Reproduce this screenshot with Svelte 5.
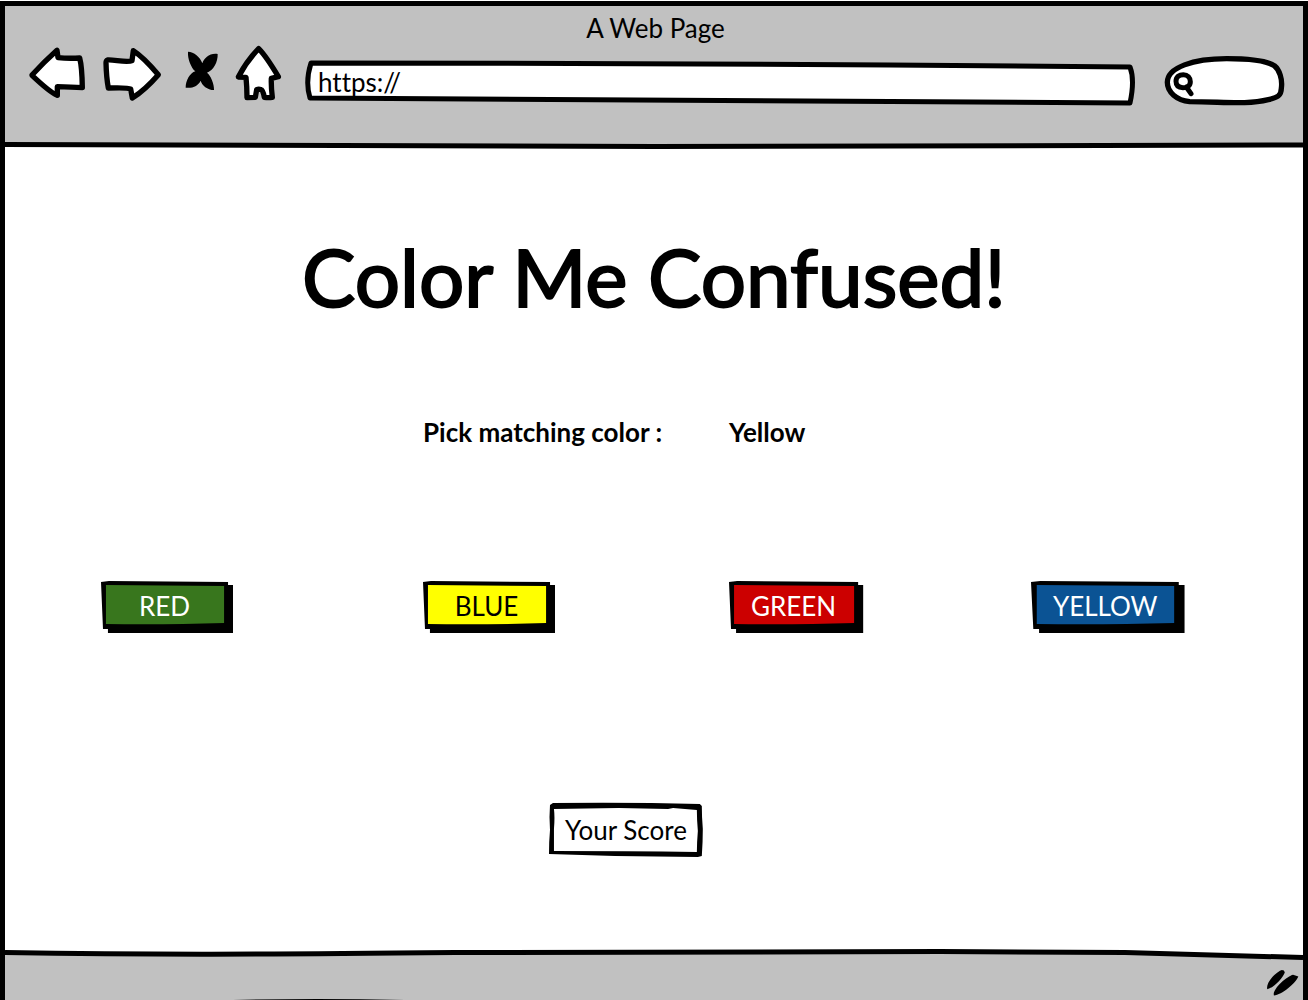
<script>
  const choices = [
    { label: 'RED', tone: 'green' },
    { label: 'BLUE', tone: 'yellow' },
    { label: 'GREEN', tone: 'red' },
    { label: 'YELLOW', tone: 'blue' }
  ];
  let target = $state('Yellow');
</script>

<div class="page">
  <div class="window">
    <header>
      <svg class="backdrop" viewBox="0 0 1298 143" preserveAspectRatio="none" aria-hidden="true">
        <path class="chrome" d="M0 0H1298V139H0Z" />
        <path class="rule" d="M0 138.500C200 140 400 140.500 650 140.500S1100 139.500 1298 139" />
      </svg>
      <div class="caption">A Web Page</div>
      <div class="toolbar">
        <nav aria-label="Browser">
          <button class="tool wide" aria-label="Back">
            <svg viewBox="78 138 186 168"><path class="shape" d="M96 225Q132 186 171 151L174 173Q205 176 239 174Q246 200 247 263Q215 262 172 260L172 286Q150 277 96 226Z" /></svg>
          </button>
          <button class="tool mid" aria-label="Forward">
            <svg viewBox="312 138 180 168"><path class="shape" d="M323 180C340 178 382 190 396 182L400 152Q430 171 475 224Q435 270 397 294L392 267Q384 262 325 264Q319 232 318 188Q318 182 323 180Z" /></svg>
          </button>
          <button class="tool slim" aria-label="Stop">
            <svg viewBox="540 138 120 168"><path d="M564 155C582 156 600 170 607 190C612 174 630 158 653 162C654 186 640 212 621 218C632 226 643 252 642 270C622 270 606 256 602 242C596 256 578 266 557 263C557 242 570 218 586 214C574 204 562 176 564 155Z" /></svg>
          </button>
          <button class="tool home" aria-label="Home">
            <svg viewBox="706 138 132 168"><path class="shape" d="M774 146Q796 168 833 230L812 235Q811 260 815 292Q803 294 791 292Q787 270 781 269Q774 266 768 269L764 292L739 293Q739 262 736 232L713 231Q738 183 774 146Z" /></svg>
          </button>
        </nav>
        <label class="address">
          <svg class="backdrop" viewBox="0 0 831 46" preserveAspectRatio="none" aria-hidden="true">
            <path class="outline" d="M6 3Q400 3 826 7Q831 20 826 43Q400 42 5 38Q0 22 6 3Z" />
          </svg>
          <input type="text" aria-label="Address" value="https://" />
        </label>
        <label class="search">
          <svg class="backdrop" viewBox="255 171 360 150" preserveAspectRatio="none" aria-hidden="true">
            <path class="shape" d="M329 308C290 304 262 280 262 250C262 205 340 179 440 179C500 179 560 186 583 200C598 212 608 240 604 268C604 290 592 296 565 302C500 318 430 308 329 308Z" />
            <path class="lens" d="M288 247C288 233 298 227 310 227C323 227 331 236 331 248C331 260 322 266 309 266C296 266 288 260 288 247ZM319 264L333 284" />
          </svg>
          <input type="search" aria-label="Search" />
        </label>
      </div>
    </header>

    <main>
      <h1>Color Me Confused!</h1>
      <div class="prompt columns">
        <span class="question">Pick matching color :</span>
        <span>{target}</span>
      </div>
      <div class="columns">
        {#each choices as choice}
          <button class="choice {choice.tone}">
            <svg class="backdrop" viewBox="0 0 133 53" preserveAspectRatio="none" aria-hidden="true">
              <path d="M0 2L8 1L128 2V5H133V53L7 53V49H2Z" />
              <path class="face" d="M5 5L124 6V43Q60 45 5 44Z" />
            </svg>
            <span>{choice.label}</span>
          </button>
        {/each}
      </div>
      <div class="result">
        <button class="score">
          <svg class="backdrop" viewBox="0 0 155 54" preserveAspectRatio="none" aria-hidden="true">
            <path fill-rule="evenodd" d="M1 2L4 0Q80 -1 152 1L154 3Q154 14 155 26Q155 38 154 53L150 54Q75 54 0 51Q0 38 1 27Q0 14 1 2ZM5 6Q6 14 5 26Q5 38 5 48Q80 48 149 49Q149 40 150 28Q149 16 149 7L137 6L125 5L120 6L70 5Z" />
          </svg>
          <span>Your Score</span>
        </button>
      </div>
    </main>

    <footer>
      <svg class="backdrop" viewBox="0 0 1298 52" preserveAspectRatio="none" aria-hidden="true">
        <path class="chrome" d="M0 4L1120 4L1298 9V52H0Z" />
        <path class="rule" d="M0 4.500C150 7 250 6.500 450 4.500C700 3 900 3 1120 4.500L1298 9.500" />
        <path d="M228 52Q310 50 400 52Z" />
      </svg>
      <svg class="grip" viewBox="558 117 100 84" aria-hidden="true">
        <path d="M562 178C556 158 588 126 604 120Q614 119 615 127C608 146 582 172 562 178ZM582 197C576 178 622 138 640 134L656 139C648 160 606 194 582 197Z" />
      </svg>
    </footer>
  </div>
</div>

<style>
  :global(body) {
    margin: 0;
    background: #fff;
  }
  .page {
    box-sizing: border-box;
    min-height: 100vh;
    padding-top: 1px;
    display: flex;
    font: 26px/32px Lato, "Liberation Sans", sans-serif;
    font-variant-ligatures: none;
    color: #000;
  }
  .window {
    flex: 1;
    display: flex;
    flex-direction: column;
    border: 5px solid #000;
    border-bottom: 0;
  }
  button,
  input {
    font: inherit;
    font-variant-ligatures: none;
    color: inherit;
    border: 0;
    padding: 0;
    background: none;
  }
  button {
    cursor: pointer;
  }
  svg {
    display: block;
    overflow: visible;
  }
  .backdrop {
    position: absolute;
    inset: 0;
    width: 100%;
    height: 100%;
  }
  .chrome {
    fill: #c1c1c1;
  }
  .rule,
  .outline {
    fill: none;
    stroke: #000;
    stroke-width: 5px;
    stroke-linejoin: round;
    vector-effect: non-scaling-stroke;
  }
  .outline {
    fill: #fff;
  }
  .shape {
    fill: #fff;
    stroke: #000;
    stroke-width: 16px;
    stroke-linejoin: round;
  }
  .lens {
    fill: none;
    stroke: #000;
    stroke-width: 15px;
    stroke-linecap: round;
  }

  header {
    position: relative;
    box-sizing: border-box;
    min-height: 143px;
    padding: 4px 18px 0 21px;
  }
  .caption {
    position: relative;
    text-align: center;
    line-height: 36px;
  }
  .toolbar {
    position: relative;
    display: flex;
    align-items: flex-end;
    height: 60px;
  }
  nav {
    display: flex;
    gap: 16px;
    align-self: flex-start;
    margin-right: 25px;
  }
  .tool {
    height: 56px;
  }
  .tool svg {
    width: 100%;
    height: 100%;
  }
  .wide {
    width: 62px;
  }
  .mid {
    width: 60px;
  }
  .slim {
    width: 40px;
  }
  .home {
    width: 44px;
  }
  .address {
    position: relative;
    flex: 1;
    display: flex;
    height: 46px;
    margin-right: 30px;
  }
  .search {
    position: relative;
    display: flex;
    width: 120px;
    height: 50px;
  }
  input {
    position: relative;
    flex: 1;
    min-width: 0;
    outline: 0;
  }
  .address input {
    padding: 0 13px 2px;
  }
  .search input {
    padding: 0 12px 0 32px;
    appearance: none;
  }

  main {
    flex: 1;
    padding-top: 79px;
  }
  h1 {
    margin: 0 0 92px;
    font-size: 80px;
    line-height: 96px;
    font-weight: 400;
    text-align: center;
    -webkit-text-stroke: 2px #000;
  }
  .columns {
    display: grid;
    grid-template-columns: 322fr 306fr 302fr 272fr;
    justify-items: start;
    padding-left: 96px;
  }
  .prompt {
    margin-bottom: 132px;
    font-weight: 700;
  }
  .question {
    grid-column: 2;
  }
  .choice {
    position: relative;
    min-width: 132px;
    height: 53px;
    padding: 0 27px 2px 22px;
    color: #fff;
  }
  .choice span,
  .score span {
    position: relative;
  }
  .face {
    fill: var(--face);
  }
  .green {
    --face: #38761d;
  }
  .yellow {
    --face: #ff0;
    color: #000;
  }
  .red {
    --face: #c00;
  }
  .blue {
    --face: #0b5394;
  }
  .result {
    display: flex;
    justify-content: center;
    padding: 170px 56px 80px 0;
  }
  .score {
    position: relative;
    height: 54px;
    padding: 0 16px;
  }

  footer {
    position: relative;
    display: flex;
    align-items: flex-end;
    justify-content: flex-end;
    box-sizing: border-box;
    height: 52px;
    padding: 0 4px 3px;
  }
  .grip {
    position: relative;
    width: 33px;
    height: 28px;
  }
</style>
